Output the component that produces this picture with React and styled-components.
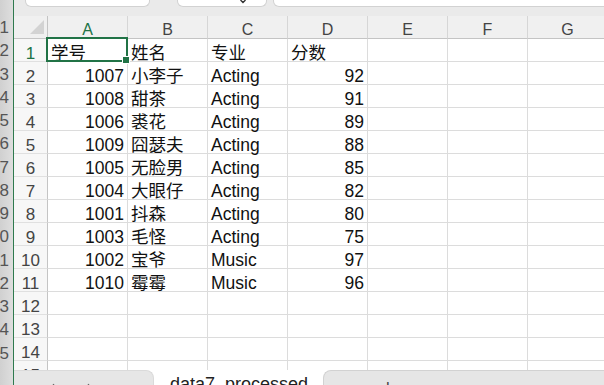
import React from "react";
import styled, { createGlobalStyle } from "styled-components";

const GlobalStyle = createGlobalStyle`
  html, body {
    margin: 0;
    padding: 0;
    background: #fff;
    overflow: hidden;
  }
  body {
    font-family: "Liberation Sans", "Noto Sans CJK SC", sans-serif;
  }
`;

const columns = ["A", "B", "C", "D", "E", "F", "G"];

const rows = [
  ["学号", "姓名", "专业", "分数"],
  [1007, "小李子", "Acting", 92],
  [1008, "甜茶", "Acting", 91],
  [1006, "裘花", "Acting", 89],
  [1009, "囧瑟夫", "Acting", 88],
  [1005, "无脸男", "Acting", 85],
  [1004, "大眼仔", "Acting", 82],
  [1001, "抖森", "Acting", 80],
  [1003, "毛怪", "Acting", 75],
  [1002, "宝爷", "Music", 97],
  [1010, "霉霉", "Music", 96],
  [],
  [],
  [],
  [],
];

const App = () => (
  <>
    <GlobalStyle />
    <Screen>
      <BackStrip>
        <BackNumbers>
          {Array.from({ length: 15 }, (_, i) => (
            <div key={i}>{i + 1}</div>
          ))}
        </BackNumbers>
      </BackStrip>
      <Window>
        <Toolbar>
          <FieldBox $width="125px" $gap="11px" />
          <FieldBox $width="90px" $gap="27px">
            <svg width="6" height="4" viewBox="0 0 6 4">
              <path d="M0.5 0 L3 2.5 L5.5 0" fill="none" stroke="#333" strokeWidth="1.4" />
            </svg>
          </FieldBox>
          <FieldBox $gap="6px" $grow />
        </Toolbar>

        <Grid>
          <Corner>
            <svg width="34" height="22" viewBox="0 0 34 22">
              <polygon points="16,18 30,18 30,4" fill="#d3d3d3" />
            </svg>
          </Corner>
          {columns.map((c) => (
            <ColHead key={c} $active={c === "A"}>
              {c}
            </ColHead>
          ))}
          {rows.map((r, ri) => (
            <React.Fragment key={ri}>
              <RowHead $active={ri === 0}>{ri + 1}</RowHead>
              {columns.map((c, ci) => {
                const v = r[ci];
                return (
                  <Cell key={c} $right={typeof v === "number"} $selected={ri === 0 && ci === 0}>
                    {v}
                  </Cell>
                );
              })}
            </React.Fragment>
          ))}
        </Grid>

        <TabBar>
          <NavBox>
            <svg width="8" height="12" viewBox="0 0 8 12">
              <path d="M6 1 L2 6 L6 11" fill="none" stroke="#666" strokeWidth="1.2" />
            </svg>
            <svg width="8" height="12" viewBox="0 0 8 12">
              <path d="M2 1 L6 6 L2 11" fill="none" stroke="#666" strokeWidth="1.2" />
            </svg>
          </NavBox>
          <SheetTab>data7_processed</SheetTab>
          <RestBox>+</RestBox>
        </TabBar>
      </Window>
    </Screen>
  </>
);

const Screen = styled.div`
  display: flex;
  width: 604px;
  height: 385px;
  overflow: hidden;
`;

const BackStrip = styled.div`
  width: 13px;
  flex-shrink: 0;
  display: flex;
  justify-content: flex-end;
  overflow: hidden;
  background: linear-gradient(to right, #d0d0d0, #dedede);
  border-right: 1px solid #2f7a4f;
`;

const BackNumbers = styled.div`
  flex-shrink: 0;
  width: 30px;
  padding: 16px 4px 0 0;
  text-align: right;
  font-size: 17px;
  line-height: 23.25px;
  color: #555;
`;

const Window = styled.div`
  flex: 1;
  min-width: 0;
  display: flex;
  flex-direction: column;
  overflow: hidden;
  background: #fff;
`;

const Toolbar = styled.div`
  height: 16px;
  flex-shrink: 0;
  display: flex;
  align-items: flex-start;
  background: #eaeaea;
`;

const FieldBox = styled.div`
  box-sizing: border-box;
  height: 7px;
  width: ${(p) => p.$width || "auto"};
  flex: ${(p) => (p.$grow ? "1 0 auto" : "0 0 auto")};
  margin-left: ${(p) => p.$gap};
  margin-right: ${(p) => (p.$grow ? "-10px" : "0")};
  background: #fff;
  border: 1px solid #d2d2d2;
  border-top: none;
  border-radius: 0 0 6px 6px;
  display: flex;
  justify-content: flex-end;
  align-items: flex-start;
  padding-right: 20px;
`;

const Grid = styled.div`
  flex: 1;
  min-height: 0;
  overflow: hidden;
  display: grid;
  grid-template-columns: 34px repeat(7, 80px);
  grid-auto-rows: 23px;
  font-size: 17.5px;
  color: #111;
`;

const HeadBase = styled.div`
  box-sizing: border-box;
  background: #f0f0f0;
  border-right: 1px solid #d6d6d6;
  border-bottom: 1px solid #c4c4c4;
`;

const Corner = styled(HeadBase)`
  border-right-color: #c4c4c4;
`;

const ColHead = styled(HeadBase)`
  display: flex;
  align-items: flex-end;
  justify-content: center;
  padding-bottom: 1px;
  font-size: 16px;
  line-height: 15px;
  color: ${(p) => (p.$active ? "#217346" : "#444")};
`;

const RowHead = styled.div`
  box-sizing: border-box;
  display: flex;
  align-items: flex-end;
  justify-content: center;
  background: #f7f7f7;
  border-right: 1px solid #c4c4c4;
  border-bottom: 1px solid #e0e0e0;
  font-size: 17px;
  line-height: 15px;
  color: ${(p) => (p.$active ? "#217346" : "#444")};
`;

const Cell = styled.div`
  position: relative;
  box-sizing: border-box;
  display: flex;
  align-items: flex-end;
  justify-content: ${(p) => (p.$right ? "flex-end" : "flex-start")};
  padding: 0 3px;
  line-height: 15px;
  white-space: nowrap;
  border-right: 1px solid #dcdcdc;
  border-bottom: 1px solid #dcdcdc;
  z-index: ${(p) => (p.$selected ? 2 : "auto")};

  ${(p) =>
    p.$selected &&
    `
    &::before {
      content: "";
      position: absolute;
      top: -2px;
      left: -2px;
      right: -1px;
      bottom: -1px;
      border: 2px solid #217346;
    }
    &::after {
      content: "";
      position: absolute;
      right: -3px;
      bottom: -3px;
      width: 6px;
      height: 6px;
      background: #217346;
      border: 1px solid #fff;
    }
  `}
`;

const TabBar = styled.div`
  height: 15px;
  flex-shrink: 0;
  display: flex;
  overflow: hidden;
  background: #fff;
`;

const NavBox = styled.div`
  box-sizing: border-box;
  width: 140px;
  flex-shrink: 0;
  display: flex;
  gap: 30px;
  padding: 12px 0 0 34px;
  background: #e6e6e6;
  border-top: 1px solid #dadada;
  border-right: 1px solid #dadada;
  border-top-right-radius: 8px;
`;

const SheetTab = styled.div`
  width: 169px;
  flex-shrink: 0;
  box-sizing: border-box;
  padding: 4px 0 0 16px;
  font-size: 18px;
  line-height: 21px;
  color: #222;
  white-space: nowrap;
`;

const RestBox = styled.div`
  flex: 1;
  box-sizing: border-box;
  padding: 6px 0 0 58px;
  font-size: 20px;
  line-height: 20px;
  color: #444;
  background: #e6e6e6;
  border: 1px solid #d2d2d2;
  border-right: none;
  border-bottom: none;
  border-top-left-radius: 8px;
`;

export default App;
